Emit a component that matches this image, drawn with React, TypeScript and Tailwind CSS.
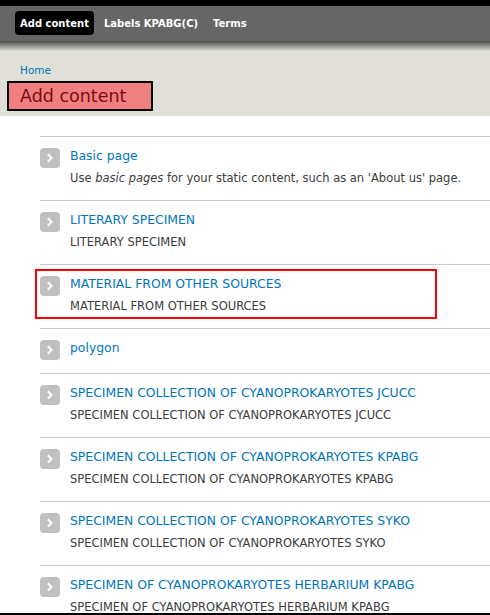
import React from "react";

const items: { title: string; desc?: React.ReactNode; highlight?: boolean }[] = [
  {
    title: "Basic page",
    desc: (
      <>
        Use <em>basic pages</em> for your static content, such as an 'About us' page.
      </>
    ),
  },
  { title: "LITERARY SPECIMEN", desc: "LITERARY SPECIMEN" },
  { title: "MATERIAL FROM OTHER SOURCES", desc: "MATERIAL FROM OTHER SOURCES", highlight: true },
  { title: "polygon" },
  {
    title: "SPECIMEN COLLECTION OF CYANOPROKARYOTES JCUCC",
    desc: "SPECIMEN COLLECTION OF CYANOPROKARYOTES JCUCC",
  },
  {
    title: "SPECIMEN COLLECTION OF CYANOPROKARYOTES KPABG",
    desc: "SPECIMEN COLLECTION OF CYANOPROKARYOTES KPABG",
  },
  {
    title: "SPECIMEN COLLECTION OF CYANOPROKARYOTES SYKO",
    desc: "SPECIMEN COLLECTION OF CYANOPROKARYOTES SYKO",
  },
  {
    title: "SPECIMEN OF CYANOPROKARYOTES HERBARIUM KPABG",
    desc: "SPECIMEN OF CYANOPROKARYOTES HERBARIUM KPABG",
  },
];

function Arrow() {
  return (
    <span className="mt-[1px] flex h-[20px] w-[20px] shrink-0 items-center justify-center rounded-[4px] bg-[#c0c0c0]">
      <svg width="20" height="20" viewBox="0 0 20 20">
        <path d="M8.5 7 L11.5 10 L8.5 13" fill="none" stroke="#ffffff" strokeWidth="2" strokeLinecap="square" />
      </svg>
    </span>
  );
}

export default function App() {
  return (
    <div
      className="h-[615px] w-[490px] overflow-hidden border-b-2 border-black bg-white"
      style={{ fontFamily: '"DejaVu Sans", Verdana, sans-serif' }}
    >
      <div className="h-[6px] bg-black" />
      <div className="flex h-[35px] items-start gap-[5px] bg-[#666666] pl-[15px] pt-[5px]">
        <span className="flex h-[24px] items-center rounded-[4px] bg-black px-[5px] text-[10px] font-bold text-white">
          Add content
        </span>
        <span className="flex h-[24px] items-center px-[5px] text-[10px] font-bold text-white">
          Labels KPABG(C)
        </span>
        <span className="flex h-[24px] items-center px-[5px] text-[10px] font-bold text-white">Terms</span>
      </div>
      <div className="h-[10px] bg-gradient-to-b from-[#4a4a4a] to-[#e0e0d8]" />
      <div className="bg-[#e0e0d8] pb-[5px] pl-[7px] pt-[12px]">
        <div className="pl-[13px] text-[10.5px] leading-[14px] text-[#0074bd]">Home</div>
        <div className="mt-[4px] h-[30px] w-[146px] border-2 border-black bg-[#f08080] pl-[11px] text-[17.5px] leading-[26px] text-[#7a0c0c]">
          Add content
        </div>
      </div>
      <div className="pl-[40px] pt-[20px]">
        {items.map((it) => (
          <div
            key={it.title}
            className={
              it.desc
                ? "relative flex gap-[10px] border-t border-[#cccccc] pb-[15px] pt-[10px]"
                : "relative flex gap-[10px] border-t border-[#cccccc] pb-[13px] pt-[10px]"
            }
          >
            {it.highlight && (
              <div className="absolute left-[-5px] top-[4px] h-[50px] w-[402px] border-2 border-[#ff0000]" />
            )}
            <Arrow />
            <div className="flex flex-col">
              <span className="whitespace-nowrap text-[12.4px] leading-[18px] text-[#0074bd]">{it.title}</span>
              {it.desc && (
                <span className="mt-[6px] whitespace-nowrap text-[11.5px] leading-[14px] text-[#3b3b3b]">
                  {it.desc}
                </span>
              )}
            </div>
          </div>
        ))}
      </div>
    </div>
  );
}
